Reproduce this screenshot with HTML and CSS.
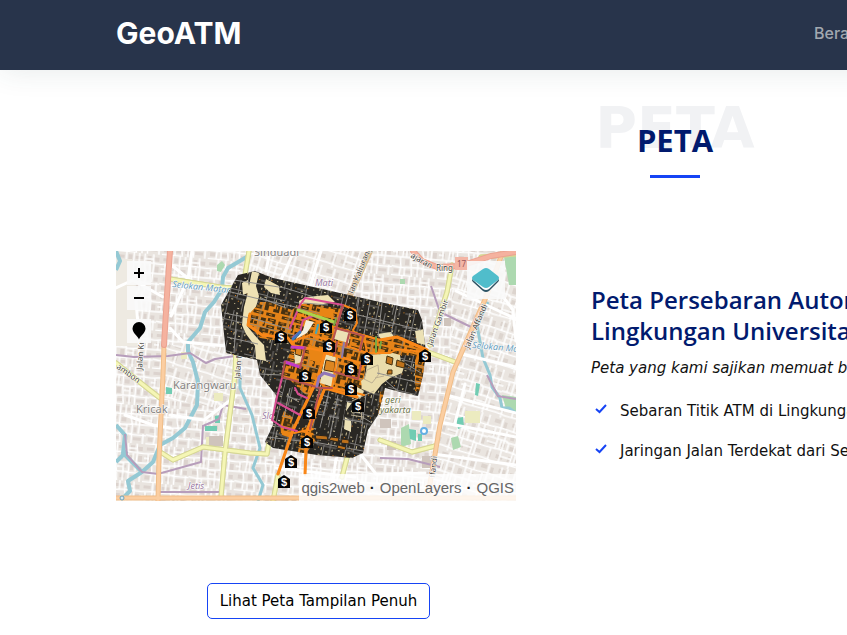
FILE: index.html
```html
<!DOCTYPE html>
<html lang="id">
<head>
<meta charset="utf-8">
<meta name="viewport" content="width=device-width, initial-scale=1">
<title>GeoATM</title>
<link rel="stylesheet" href="styles.css">
</head>
<body>
<div class="page">
<header class="navbar">
  <div class="container navbar-row">
    <a class="brand" href="#">GeoATM</a>
    <nav class="menu"><a href="#">Beranda</a></nav>
  </div>
</header>
<main>
  <section class="section-title">
    <span class="ghost" aria-hidden="true">PETA</span>
    <h2>PETA</h2>
  </section>
  <section class="container content">
    <div class="map-column">
      <div class="map">
        <svg class="map-canvas" viewBox="0 0 400 250" preserveAspectRatio="xMidYMid slice" role="img" aria-label="Peta sebaran ATM">
          <defs>
            <pattern id="streets" width="46" height="38" patternUnits="userSpaceOnUse" patternTransform="rotate(5)">
              <rect width="46" height="38" fill="#e9e4df"/>
              <path d="M2 3h7v3H2zM13 2h4v5h-4zM20 3h8v3h-8zM32 2h4v6h-4zM39 3h5v4h-5zM2 12h4v5H2zM10 12h6v3h-6zM20 13h5v4h-5zM30 12h6v4h-6zM40 12h4v6h-4zM3 22h6v4H3zM13 21h4v6h-4zM22 22h7v3h-7zM33 22h3v5h-3zM40 23h4v4h-4zM2 31h5v4H2zM12 32h7v3h-7zM23 31h5v4h-5zM33 32h8v3h-8z" fill="#dcd3ce"/>
              <path d="M0 9.500l11-1 8 1 11-1 16 1M0 19h18l2 1 12-1h14M0 28.500l8 1 22-1v1h16M11 0v10l-1 9M8 19l1 10-1 9M18.500 0v19l2 19M29.500 0v10l2 10v18M38 0l1 10-1 18M4 9v10M26 19v19M0 37.500h20M43 28v10M30 5h8M14 9v10M35 10v10M13 29v9M0 14h5M20 24h6M24 0v9" fill="none" stroke="#fff" stroke-width="1.500"/>
            </pattern>
            <pattern id="streets-b" width="41" height="47" patternUnits="userSpaceOnUse" patternTransform="rotate(17)">
              <rect width="41" height="47" fill="#eae5e0"/>
              <path d="M2 2h6v4H2zM12 3h3v6h-3zM20 2h7v4h-7zM32 3h6v5h-6zM3 14h4v5H3zM12 15h6v3h-6zM22 13h4v6h-4zM31 14h7v3h-7zM2 25h7v3H2zM14 24h5v4h-5zM24 25h6v4h-6zM35 24h4v6h-4zM3 35h5v6H3zM13 36h7v4h-7zM25 35h4v6h-4zM33 36h5v4h-5z" fill="#dcd4ce"/>
              <path d="M0 10.500l10-1 19 1h12M0 21h20v1h21M0 31.500l17-1 24 1M0 43l10 1 31-1M10 0v32M17 10v34M29 0v22l-1 25M22 22v10M35 10v22M6 32v15M32 32v11M5 10v11M23 0v10M14 21v10M0 26h10M29 16h12M17 37h12M37 0v10" fill="none" stroke="#fff" stroke-width="1.500"/>
            </pattern>
            <pattern id="blocks" width="37" height="31" patternUnits="userSpaceOnUse" patternTransform="rotate(13)">
              <rect width="37" height="31" fill="#292723"/>
              <path d="M2 3h1v2H2zM6 1h1v3H6zM11 4h2v1h-2zM14 7h1v2h-1zM20 2h2v1h-2zM25 4h1v2h-1zM30 2h2v1h-2zM33 7h1v1h-1zM3 12h1v2H3zM7 11h2v1H7zM12 14h1v1h-1zM19 12h1v3h-1zM23 11h2v1h-2zM28 15h1v2h-1zM34 13h1v2h-1zM2 20h2v1H2zM7 22h1v3H7zM12 20h2v1h-2zM16 24h1v1h-1zM22 21h1v3h-1zM27 24h2v1h-2zM33 21h1v2h-1zM4 28h2v1H4zM20 28h2v1h-2zM31 28h1v1h-1z" fill="#cdbf93"/>
              <path d="M5 6h1v1H5zM17 3h1v1h-1zM28 7h1v1h-1zM15 16h1v1h-1zM26 12h1v1h-1zM10 24h1v1h-1zM19 21h1v1h-1zM35 26h1v1h-1z" fill="#d97f1c"/>
              <path d="M0 9.500h9v1h19M0 18h17v1h20M9.500 0v31M17.500 0v18M28 0v10M24.500 18v13M31 10v21M0 27h10" fill="none" stroke="#777573"/>
            </pattern>
            <pattern id="buildings" width="29" height="27" patternUnits="userSpaceOnUse" patternTransform="rotate(14)">
              <rect width="29" height="27" fill="#e58318"/>
              <path d="M1 2h8v3H5v5H1zM6 7h3v3H6zM12 2h5v8h-2V5h-3zM19 1h8v5h-3V4h-5zM19 8h8v3h-8zM1 13h6v4h4v4H1zM13 12h9v4h-5v5h-4zM24 13h4v8h-6v-3h2zM3 23h10v3H3zM16 23h9v3h-9z" fill="#463112"/>
              <path d="M3 3h4M2.500 6v2M15.500 6v2M21 2.500h4M3 15h2M5 19h3M16 14h3M25.500 15v3M6 24.500h4M19 24.500h3M21 9.500h4" stroke="#d88422"/>
              <path d="M10 0 11 11 10 27M0 11.500H29" fill="none" stroke="#a28662"/>
            </pattern>
            <clipPath id="campus"><path d="M122 24 139 20 157 27 224 42 264 51 302 59 306 69 310 101 307 124 302 145 284 141 269 137 262 164 252 179 247 202 236 207 201 204 157 197 149 191 157 174 160 144 144 124 141 109 110 102 105 54Z"/></clipPath>
            <symbol id="atm" viewBox="0 0 12 13" width="12" height="13" overflow="visible">
              <path d="M6 0 12 4V13H0V4Z" fill="#050505"/>
              <text x="6" y="11" class="atm-sign">$</text>
            </symbol>
          </defs>

          <rect width="400" height="250" fill="url(#streets)"/>
          <path d="M134 0H254L234 44 122 24ZM336 14 400 0V250H311L334 124ZM48 94 120 95 119 160 44 147Z" fill="url(#streets-b)"/>
          <path d="M0 8H16L20 50 24 95H0Z" fill="#eeeae2"/>

          <path d="M101 14l5-4 3 4-4 7-4-1zM284 28h5v5h-5zM387 0h13v34h-7zM335 187l7-2 3 11-8 3zM285 177l8-4 2 20-10 3zM386 144l14 2v15l-10-3z" fill="#add9b0"/>
          <path d="M89 175h12v5H89zM99 165l5-1v8h-5zM50 136l6 1v6h-6zM293 178l7 1v11l-6-2zM302 183h4v7h-4zM340 167l7-1 1 10-6 2zM360 132l4 1-2 12-3-1z" fill="#71ccb3"/>
          <path d="M65 101h6v7h-6zM90 186h13v8H90zM296 160h9v9h-9zM349 160h15v12h-15zM98 142h9v8h-9zM307 165h8v8h-8z" fill="#ecebc0"/>
          <path d="M93 185h14v10H93zM264 168h11v9h-11zM306 205h11v12h-11zM328 67h7v8h-7zM271 190h9v9h-9z" fill="#cfc4bc"/>

          <g fill="none" stroke="#94c9d4" stroke-linejoin="round">
            <path d="M0 0 4 10 0 19M134 4 112 17 107 26 106 38 98 51 89 61 84 77 72 91 72 100 77 111 82 131 81 154 69 177 57 187 44 194 37 211 26 221 7 202 9 184 0 174M26 221 12 230 14 240 7 247M0 211 11 200" stroke-width="4"/>
            <path d="M124 124 124 137 136 164 144 197 137 217 147 234 142 250M372 51 361 74 367 107 374 124 376 136 384 147 386 157 393 157 400 162" stroke-width="3"/>
          </g>
          <path d="M0 104 18 106 52 105 74 102 90 112 99 108 119 105M9 183 11 204 26 221 42 223 85 211 87 175 103 168 107 154 130 158M42 241H104M264 207 292 208 324 216M371 124 382 145 400 148M315 35 324 61 355 76" fill="none" stroke="#b79dbb" stroke-width="2"/>

          <g fill="none" stroke-linecap="round" stroke-linejoin="round">
            <path d="M0 37 17 29 24 13M17 29 47 46M20 50 24 97M54 77 67 91 121 96M54 13 78 32 104 36M9 164 37 174 54 177M76 0 72 28 55 65M154 0 150 20M178 0 165 29M205 0 194 36M54 164 88 169 120 145M340 40 400 68M400 116 345 103M334 145 400 162M324 171 400 186M317 203 400 214M349 133 339 172M160 217 239 226M187 222 184 250M220 208 214 250M245 204 260 223 309 222M388 47 397 59 400 90" stroke="#fff" stroke-width="3"/>
            <path id="yellow-roads" d="M133 0 128 30M54 28 104 36 130 38M0 112 21 129 44 147M46 202 57 209 87 196 134 202 151 203 153 191M120 95 119 124 109 201 105 246M336 14 331 41 314 94M312 101 339 111M264 189 296 201 319 195M231 207 226 226M157 250 162 224M400 3 365 6" stroke="#d6d795" stroke-width="5"/>
            <use href="#yellow-roads" class="road-core"/>
            <path d="M133 0 128 30M54 28 104 36 130 38M0 112 21 129 44 147M46 202 57 209 87 196 134 202 151 203 153 191M120 95 119 124 109 201 105 246M336 14 331 41 314 94M312 101 339 111M264 189 296 201 319 195M231 207 226 226M157 250 162 224" stroke="#f5f6b5" stroke-width="3"/>
            <path d="M254 0 234 44" stroke="#d8b990" stroke-width="6"/>
            <path d="M48 94 47 124 46 144 43 207 42 250M0 247H400M387 0 371 44 337 121 324 174 311 250" stroke="#f0bd88" stroke-width="5"/>
            <path d="M48 94 47 124 46 144 43 207 42 250M0 247H400M387 0 371 44 337 121 324 174 311 250" stroke="#fbcea1" stroke-width="3"/>
            <path d="M54 0 51 44 48 94M297 0 306 10 321 16 344 15 375 5 400 1" stroke="#eba291" stroke-width="6"/>
            <path d="M54 0 51 44 48 94M297 0 306 10 321 16 344 15 375 5 400 1" stroke="#f5b29f" stroke-width="4"/>
          </g>
          <rect x="339" y="6" width="13" height="13" fill="#f3b5a5"/>

          <g class="road-name">
            <text x="138" y="5" class="place">Sinduadi</text>
            <text x="57" y="138" class="place">Karangwaru</text>
            <text x="20" y="162" class="place">Kricak</text>
            <text x="72" y="238" class="district">Jetis</text>
            <text x="199" y="35" class="district">Mati</text>
            <text x="146" y="168" class="district">Sla</text>
            <text transform="translate(56 36) rotate(6)" class="water">Selokan Mataram</text>
            <text transform="translate(356 97) rotate(5)" class="water">Selokan Mataram</text>
            <text transform="translate(26 119) rotate(-86)">Jalan Kr</text>
            <text transform="translate(0 117) rotate(35)">ambon</text>
            <text transform="translate(237 43) rotate(-68)">lan Kaliurang</text>
            <text transform="translate(316 95) rotate(-70)">Jalan Gambir</text>
            <text transform="translate(353 98) rotate(-67)">Jalan Affandi</text>
            <text transform="translate(319 227) rotate(-84)">ffandi</text>
            <text transform="translate(294 6) rotate(30)">ajaran</text>
            <text x="320" y="20">Ring</text>
            <text transform="translate(124 128) rotate(-86)">Jalan M</text>
            <text x="341" y="16" class="shield">17</text>
            <text x="269" y="152" class="school">geri</text>
            <text x="264" y="162" class="school">yakarta</text>
          </g>

          <g clip-path="url(#campus)">
            <rect x="100" y="15" width="215" height="200" fill="url(#blocks)"/>
            <path d="M136 20 143 22 140 35 143 45 140 56 132 65 131 75 142 88 148 94 150 110 140 108 139 95 130 83 126 74 128 56 131 45ZM150 28 163 35 164 44 155 42 148 36ZM183 50 190 46 212 44 219 51 202 54 199 59 184 58ZM126 32 132 29 134 41 127 44Z" fill="#eee1b4"/>
            <path d="M144 51 154 51 176 59 182 54 191 52 226 58 222 75 264 88 281 84 309 97 308 105 284 104 261 104 249 114 248 136 241 144 216 138 210 140 201 129 194 148 174 129 167 125 171 111 177 92 144 87 132 73 135 61Z" fill="url(#buildings)"/>
            <path d="M168 160 179 168 175 187 165 183 164 170ZM186 177 196 175 199 190 189 204 181 204ZM299 104 309 100 307 140 299 140ZM264 141 272 138 262 165Z" fill="url(#buildings)"/>
            <path d="M192 93 207 98 209 103 204 112 194 109ZM204 57 217 58 218 68 204 65ZM200 70 210 73 207 83 196 84ZM166 179 176 181 175 187 166 184Z" fill="#e98515"/>
            <path d="M255 104 277 102 284 104 285 112 288 116 286 122 274 127 266 133 258 143 246 138 245 130 249 127 251 112Z" fill="#eadcab"/>
            <path d="M219 77 234 81 233 92 218 88ZM209 103 222 107 217 136 204 132ZM178 101 186 99 187 111 179 113ZM241 136 248 140 244 148 237 142ZM231 151 244 154 244 162 230 160ZM229 166 235 170 235 181 228 178ZM261 83 275 81 278 86 266 89ZM299 80 308 78 310 94 301 92Z" fill="#ece1b5"/>
            <path d="M210 109 219 111 218 121 208 119ZM180 97 186 98 185 105 179 103Z" fill="#dc8621" stroke="#4c3412"/>
            <path d="M251 119l11-5 1 9-7 9-8-4zM259 127l9-2M236 150l13-6 9-4M244 149l2 20M235 164l12 2" fill="none" stroke="#bdb092"/>
            <path d="M202 143 223 149 242 152M202 163 226 168 246 171M207 151 230 155M213 140 204 177M222 144 213 190M230 147 224 188M250 143 244 192M163 140 183 151M174 137 168 166M151 186 184 190M161 180 158 196M198 191 247 200M248 167 259 174M187 52 212 54M232 44 229 55M243 47 239 73M254 50 248 83M266 52 262 86M281 55 275 83M294 62 287 91M238 63 305 79M108 62 139 68 176 79M111 86 142 93M111 40 139 47 184 57M118 29 169 37 198 46M121 61 118 101M145 47 170 57M261 122 304 132M289 112 305 122M270 130 284 142M144 123 165 124" fill="none" stroke="#92908d" stroke-width="1"/>
            <path d="M218 144 204 184M229 146 222 184M239 151 232 161M172 132 167 150M184 154 177 173" fill="none" stroke="#292723" stroke-width="4"/>
            <path d="M199 184l12 1 1 4-12-1zM215 186l8 1-1 4-9-2zM226 188l7 1v4l-8-1zM222 194l8 2-1 3-8-2z" fill="#bf721b" stroke="#2b241b"/>
            <path d="M271 105l6 2-1 7-6-2zM272 119h4v4h-5zM281 109l8 3-1 5-8-2z" fill="#bf721b" stroke="#493513"/>
            <path d="M190 69 198 71 191 82 180 88 187 79Z" fill="#f5f0df"/>
          </g>

          <g fill="none" stroke-linecap="round" stroke-linejoin="round">
            <path d="M134 63 132 74 146 84 172 87 177 94 211 101 249 114M176 91 194 84 219 91 251 102 274 102 281 98 307 101M184 64 221 77 264 89 281 86 311 99M162 223 177 179 201 129 209 102 241 111M189 223 191 179 194 179 209 137 241 146M216 137 221 106M227 54 239 59 241 72 237 79M178 182 197 178M249 91 251 101 246 119M215 136 248 144" stroke="#f98718" stroke-width="2"/>
            <path d="M134 63 132 74 146 84 172 87 177 94M162 223 177 179 201 129 209 102M189 223 191 179 209 137 241 146M264 89 281 86 311 99" stroke="#f98718" stroke-width="3"/>
            <path d="M221 74 227 54 189 47 184 54 174 77M177 86 184 81 187 69 197 65 219 72M166 127 161 146 156 169 166 176 181 180M162 152 184 164M179 137 182 143 191 147" stroke="#d84d91" stroke-width="2"/>
            <path d="M189 97 176 96M184 116 169 111" stroke="#c33bc6" stroke-width="3"/>
            <path d="M169 111 166 126 204 137 216 137M189 97 184 117M219 77 234 81 248 85M221 91 218 104M233 83 230 95M247 105 242 128 219 121M227 54 217 89M204 138 194 178M247 86 244 99" stroke="#b65252" stroke-width="2"/>
            <path d="M182 59 218 71" stroke="#acd34b" stroke-width="3"/>
            <path d="M201 135 203 126 208 122 218 125" stroke="#9277b7" stroke-width="3"/>
            <path d="M177 88 184 81" stroke="#3f78c0" stroke-width="3"/>
            <path d="M200 82 202 74" stroke="#39a8c5" stroke-width="2"/>
            <path d="M228 92 226 106" stroke="#8b7bae" stroke-width="2"/>
            <path d="M260 86V101M265 91 264 97M220 68 218 74" stroke="#7ba944" stroke-width="2"/>
          </g>

          <use href="#atm" x="159" y="79"/><use href="#atm" x="204" y="69"/>
          <use href="#atm" x="228" y="57"/><use href="#atm" x="207" y="88"/>
          <use href="#atm" x="245" y="101"/><use href="#atm" x="303" y="98"/>
          <use href="#atm" x="229" y="111"/><use href="#atm" x="183" y="118"/>
          <use href="#atm" x="229" y="131"/><use href="#atm" x="236" y="148"/>
          <use href="#atm" x="187" y="155"/><use href="#atm" x="185" y="184"/>
          <use href="#atm" x="169" y="204"/><use href="#atm" x="162" y="224"/>
          <circle cx="308" cy="180" r="3" fill="#fff" stroke="#64afe3" stroke-width="2"/>
          <circle cx="6" cy="247" r="2" fill="#d9e8ed" stroke="#68a3be"/>
        </svg>
        <div class="map-tools">
          <button type="button" aria-label="Perbesar"><svg viewBox="0 0 24 24"><path d="M7 12H17M12 7V17"/></svg></button>
          <button type="button" aria-label="Perkecil"><svg viewBox="0 0 24 24"><path d="M7 12H17"/></svg></button>
          <button type="button" class="locate" aria-label="Lokasi saya"><svg viewBox="0 0 24 24"><path class="pin" d="M12 20.500C10.500 16.500 5.500 14 5.500 9.500A6.500 6.500 0 0 1 18.500 9.500C18.500 14 13.500 16.500 12 20.500Z"/></svg></button>
        </div>
        <button type="button" class="layers" aria-label="Lapisan">
          <svg viewBox="0 0 38 38"><path d="M6 21Q4 19 6 17L16 10Q19 8 22 10L31 17Q33 19 31 21L22 30Q19 32 16 30Z" fill="#2d5364"/><path d="M6 19Q4 17 6 15L16 8Q19 6 22 8L31 15Q33 17 31 19L22 28Q19 30 16 28Z" fill="#fff"/><path d="M6 19Q4 17 6 15L16 8Q19 6 22 8L31 15Q33 17 31 19L22 26Q19 28 16 26Z" fill="#50bdcb"/></svg>
        </button>
        <div class="attribution"><a href="#">qgis2web</a><b>·</b><a href="#">OpenLayers</a><b>·</b><a href="#">QGIS</a></div>
      </div>
      <a class="full-map" href="#">Lihat Peta Tampilan Penuh</a>
    </div>
    <div class="description">
      <h3>Peta Persebaran Automatic<br>Lingkungan Universitas</h3>
      <p>Peta yang kami sajikan memuat beberapa</p>
      <ul>
        <li><svg viewBox="0 0 20 20"><path d="M5 10 8.500 13 15 6"/></svg>Sebaran Titik ATM di Lingkungan</li>
        <li><svg viewBox="0 0 20 20"><path d="M5 10 8.500 13 15 6"/></svg>Jaringan Jalan Terdekat dari Sebaran</li>
      </ul>
    </div>
  </section>
</main>
</div>
</body>
</html>
```
FILE: styles.css
```css
* { box-sizing: border-box; }
html { overflow-x: hidden; }
body {
  margin: 0;
  overflow-x: clip;
  background: #fff;
  color: #111;
  font: 15px/24px "DejaVu Sans", Verdana, sans-serif;
}
.page { min-width: 1350px; }
a { color: inherit; text-decoration: none; }
.container { max-width: 1118px; margin: 0 auto; }
.navbar { background: #28344b; box-shadow: 0 0 30px rgba(40, 70, 70, .12); }
.navbar-row {
  display: flex;
  align-items: center;
  justify-content: space-between;
  min-height: 70px;
  padding-bottom: 4px;
  font-family: Inter, sans-serif;
}
.brand { color: #fff; font-size: 30px; line-height: 36px; font-weight: 700; }
.menu { flex-basis: 420px; color: #a2a8b0; font-size: 16px; font-weight: 500; }

.section-title { display: grid; justify-items: center; padding-top: 28px; }
.ghost, .section-title h2 { grid-area: 1 / 1; }
.ghost { color: #f1f2f4; font-size: 57px; line-height: 60px; font-weight: 700; }
.section-title h2 {
  margin: 20px 0 0;
  color: #011a6e;
  font: 700 31px/44px "Open Sans", sans-serif;
}
.section-title::after { content: ""; width: 50px; height: 3px; margin-top: 13px; background: #1644f5; }

.content { display: grid; grid-template-columns: 405px 1fr; column-gap: 70px; padding-top: 73px; }
.map-column { display: flex; flex-direction: column; align-items: center; }
.map { position: relative; align-self: flex-start; width: 400px; overflow: hidden; }
.map-canvas { display: block; width: 100%; }
.atm-sign { fill: #fff; font: 700 11px "Liberation Sans", sans-serif; text-anchor: middle; }
.road-name { fill: #494640; font: 8px "Noto Sans", sans-serif; stroke: #fff; stroke-width: 1px; paint-order: stroke; }
.place { fill: #85827f; font-size: 11px; }
.district { fill: #9b7ba3; font-size: 9px; font-style: italic; }
.water { fill: #669dbd; font-size: 9px; font-style: italic; }
.school { fill: #6e7548; font-size: 9px; font-style: italic; }
.shield { fill: #99565a; stroke: none; }

.map-tools { position: absolute; top: 10px; left: 11px; display: grid; gap: 1px; }
.map button { border: 0; padding: 0; background: rgba(250, 250, 250, .9); }
.map-tools button { width: 24px; height: 24px; }
.map-tools .locate { margin-top: 8px; }
.map button svg { display: block; width: 100%; }
.map-tools path { fill: none; stroke: #000; stroke-width: 2px; }
.map-tools .pin { fill: #000; stroke: none; }
.map .layers { position: absolute; top: 10px; right: 11px; width: 38px; height: 38px; }
.attribution {
  position: absolute;
  right: 0;
  bottom: 0;
  display: flex;
  gap: 5px;
  padding: 2px 2px 1px;
  background: rgba(255, 255, 255, .8);
  color: #666;
  font: 15px/24px "Liberation Sans", sans-serif;
  white-space: nowrap;
}
.attribution b { color: #222; }
.full-map {
  margin-top: 82px;
  border: 1px solid #1644f5;
  border-radius: 5px;
  padding: 5px 12px;
  color: #000;
}

.description { padding-top: 33px; }
.description h3 {
  margin: 0;
  color: #011a6e;
  font: 600 24px/31px "Open Sans", sans-serif;
}
.description p { margin: 10px 0 0; font-style: italic; }
.description ul { list-style: none; margin: 19px 0 0; padding: 0; }
.description li { display: flex; gap: 9px; margin-bottom: 16px; }
.description li svg { width: 20px; height: 20px; fill: none; stroke: #1644f5; stroke-width: 2px; }
```
